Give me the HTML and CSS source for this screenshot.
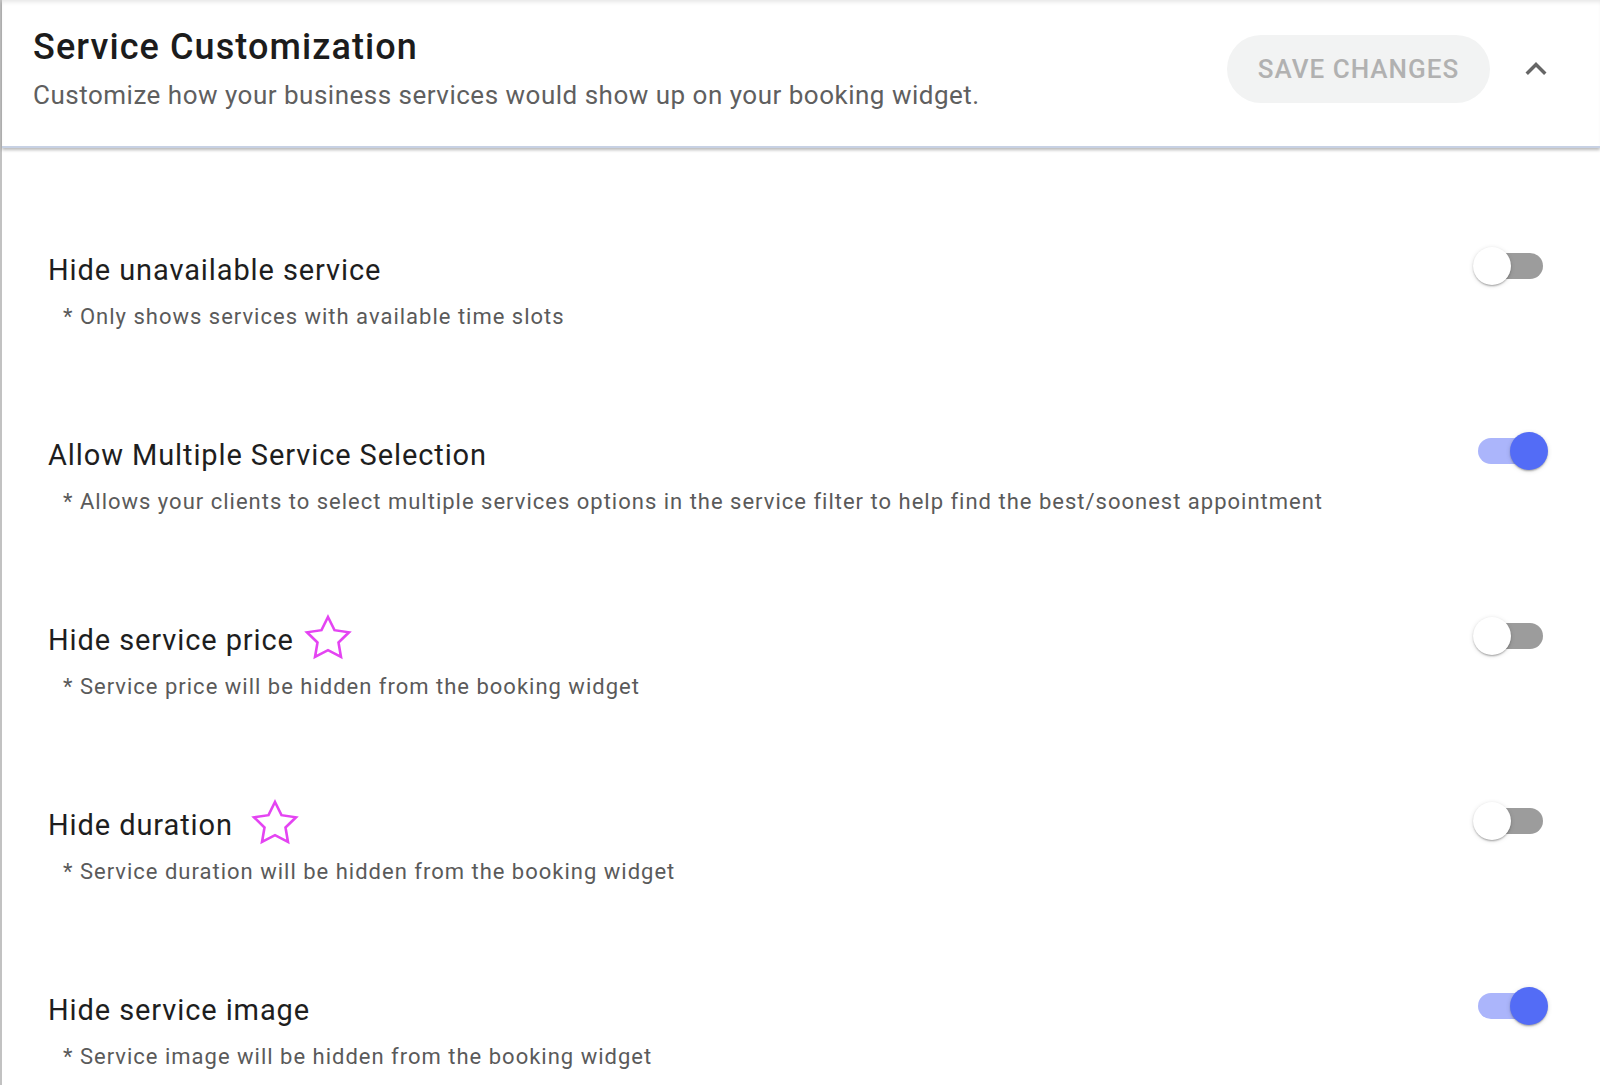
FILE: index.html
```html
<!DOCTYPE html>
<html lang="en">
<head>
<meta charset="utf-8">
<title>Service Customization</title>
<link rel="stylesheet" href="styles.css">
</head>
<body>
<div class="card">
  <header class="card-header">
    <div class="heading">
      <h1 class="title">Service Customization</h1>
      <p class="subtitle">Customize how your business services would show up on your booking widget.</p>
    </div>
    <div class="actions">
      <button class="save-btn" disabled>SAVE CHANGES</button>
      <span class="collapse-icon">
        <svg width="42" height="42" viewBox="0 0 24 24"><path d="M12 8l-6 6 1.41 1.41L12 10.83l4.59 4.58L18 14z" fill="#666"/></svg>
      </span>
    </div>
  </header>
  <div class="options">
    <div class="option">
      <div class="option-text">
        <div class="option-title">Hide unavailable service</div>
        <div class="option-desc">* Only shows services with available time slots</div>
      </div>
      <span class="switch"><span class="track"></span><span class="thumb"></span></span>
    </div>
    <div class="option">
      <div class="option-text">
        <div class="option-title">Allow Multiple Service Selection</div>
        <div class="option-desc">* Allows your clients to select multiple services options in the service filter to help find the best/soonest appointment</div>
      </div>
      <span class="switch on"><span class="track"></span><span class="thumb"></span></span>
    </div>
    <div class="option">
      <div class="option-text">
        <div class="option-title">Hide service price<svg class="star" width="42" height="40" viewBox="2 2 20 19.02" overflow="visible"><polygon points="12,2 15.09,8.26 22,9.27 17,14.14 18.18,21.02 12,17.77 5.82,21.02 7,14.14 2,9.27 8.91,8.26" fill="none" stroke="#e444f2" stroke-width="2.6" vector-effect="non-scaling-stroke" stroke-linejoin="miter"/></svg></div>
        <div class="option-desc">* Service price will be hidden from the booking widget</div>
      </div>
      <span class="switch"><span class="track"></span><span class="thumb"></span></span>
    </div>
    <div class="option">
      <div class="option-text">
        <div class="option-title">Hide duration&nbsp;<svg class="star" width="42" height="40" viewBox="2 2 20 19.02" overflow="visible"><polygon points="12,2 15.09,8.26 22,9.27 17,14.14 18.18,21.02 12,17.77 5.82,21.02 7,14.14 2,9.27 8.91,8.26" fill="none" stroke="#e444f2" stroke-width="2.6" vector-effect="non-scaling-stroke" stroke-linejoin="miter"/></svg></div>
        <div class="option-desc">* Service duration will be hidden from the booking widget</div>
      </div>
      <span class="switch"><span class="track"></span><span class="thumb"></span></span>
    </div>
    <div class="option">
      <div class="option-text">
        <div class="option-title">Hide service image</div>
        <div class="option-desc">* Service image will be hidden from the booking widget</div>
      </div>
      <span class="switch on"><span class="track"></span><span class="thumb"></span></span>
    </div>
  </div>
</div>
</body>
</html>
```

FILE: styles.css
```css
* { box-sizing: border-box; }
html, body {
  margin: 0;
  padding: 0;
  background: #fff;
  font-family: Roboto, "Liberation Sans", Arial, sans-serif;
}
body {
  width: 1600px;
  height: 1085px;
  overflow: hidden;
}
.card {
  height: 1085px;
  border-left: 2px solid #c2c2c2;
  background: #fff;
}
.card-header {
  height: 148px;
  display: flex;
  align-items: flex-start;
  justify-content: space-between;
  padding: 26px 43px 0 31px;
  border-bottom: 2px solid #c7d1e4;
  box-shadow: inset 0 4px 4px -2px rgba(0, 0, 0, 0.10), 0 2px 3px rgba(0, 0, 0, 0.28);
  position: relative;
}
.heading {
  display: flex;
  flex-direction: column;
  gap: 10px;
}
.title {
  margin: 0;
  font-size: 36px;
  line-height: 43px;
  font-weight: 500;
  letter-spacing: 1.1px;
  color: #1c1c1c;
}
.subtitle {
  margin: 0;
  font-size: 26px;
  line-height: 32px;
  color: #5f5f5f;
  letter-spacing: 0.5px;
}
.actions {
  display: flex;
  align-items: center;
  gap: 25px;
  margin-top: 9px;
}
.save-btn {
  height: 68px;
  width: 263px;
  border: none;
  border-radius: 34px;
  background: #f2f3f3;
  color: #b1b1b1;
  font-family: Roboto, "Liberation Sans", Arial, sans-serif;
  font-size: 26px;
  font-weight: 500;
  letter-spacing: 1px;
  padding: 0;
}
.collapse-icon {
  display: flex;
  width: 42px;
  height: 42px;
}
.options {
  display: flex;
  flex-direction: column;
  gap: 106px;
  padding: 104px 52px 0 46px;
}
.option {
  display: flex;
  justify-content: space-between;
  align-items: flex-start;
}
.option-text {
  display: flex;
  flex-direction: column;
  gap: 15px;
}
.option-title {
  display: flex;
  align-items: flex-start;
  font-size: 29px;
  line-height: 36px;
  letter-spacing: 0.9px;
  color: #1e1e1e;
  white-space: pre;
}
.star {
  margin-left: 13px;
  margin-top: -5px;
  flex: none;
}
.option-desc {
  padding-left: 15px;
  font-size: 22px;
  line-height: 28px;
  color: #5a5a5a;
  letter-spacing: 1px;
}
.switch {
  position: relative;
  width: 75px;
  height: 38px;
  margin-top: -5px;
  flex: none;
}
.track {
  position: absolute;
  left: 5px;
  top: 6px;
  width: 65px;
  height: 26px;
  border-radius: 13px;
  background: #9c9c9c;
}
.thumb {
  position: absolute;
  left: 0;
  top: 0;
  width: 38px;
  height: 38px;
  border-radius: 50%;
  background: #fff;
  box-shadow: 0 2px 2px -1px rgba(0, 0, 0, 0.2), 0 1px 2px rgba(0, 0, 0, 0.14), 0 1px 5px rgba(0, 0, 0, 0.12);
}
.switch.on .track {
  background: #abb5fb;
}
.switch.on .thumb {
  left: 37px;
  background: #536cf6;
}
```
